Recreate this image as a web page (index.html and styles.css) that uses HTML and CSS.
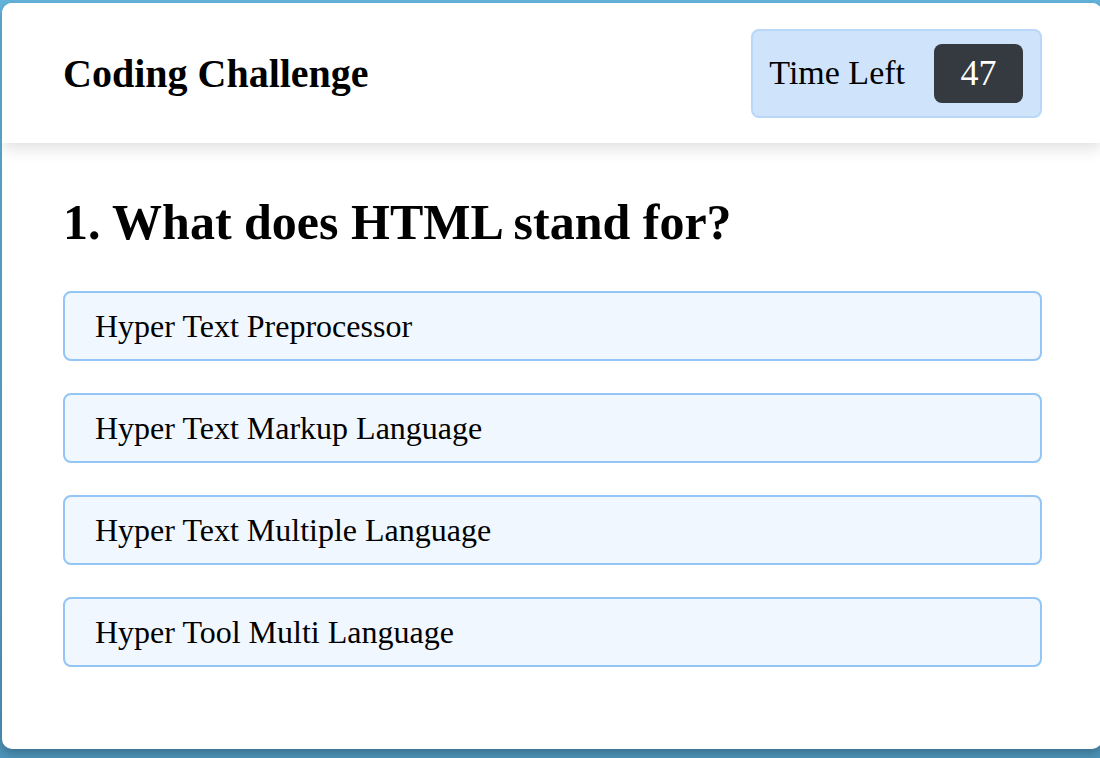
FILE: index.html
```html
<!DOCTYPE html>
<html>
<head>
<meta charset="utf-8">
<link rel="stylesheet" href="styles.css">
</head>
<body>
<div class="card">
  <header class="header">
    <h1 class="title">Coding Challenge</h1>
    <div class="timer">
      <span class="timer-label">Time Left</span>
      <span class="timer-value">47</span>
    </div>
  </header>
  <main class="quiz">
    <h2 class="question">1. What does HTML stand for?</h2>
    <ul class="options">
      <li class="option">Hyper Text Preprocessor</li>
      <li class="option">Hyper Text Markup Language</li>
      <li class="option">Hyper Text Multiple Language</li>
      <li class="option">Hyper Tool Multi Language</li>
    </ul>
  </main>
</div>
</body>
</html>
```

FILE: styles.css
```css
html, body {
  margin: 0;
  padding: 0;
  height: 100%;
  overflow: hidden;
}
body {
  background: linear-gradient(180deg, #64b4dc 0%, #5aa7cf 70%, #4d93b9 100%);
  font-family: "Liberation Serif", "Times New Roman", serif;
  color: #000;
  padding: 3px 0 0 2px;
  box-sizing: border-box;
}
.card {
  width: 1100px;
  height: 746px;
  background: #fff;
  border-radius: 10px;
  overflow: hidden;
  box-shadow: 0 4px 10px rgba(0, 0, 0, 0.25);
}
.header {
  height: 140px;
  padding: 0 60px 0 61px;
  display: flex;
  align-items: center;
  justify-content: space-between;
  background: #fff;
  box-shadow: 0 4px 16px rgba(0, 0, 0, 0.14);
  position: relative;
}
.title {
  margin: 0;
  font-size: 40px;
  font-weight: bold;
}
.timer {
  display: flex;
  align-items: center;
  gap: 29px;
  background: #cfe3fb;
  border: 2px solid #b9d7f9;
  border-radius: 8px;
  padding: 13px 17px 13px 16px;
}
.timer-label {
  font-size: 34px;
}
.timer-value {
  display: flex;
  align-items: center;
  justify-content: center;
  width: 89px;
  height: 59px;
  background: #343a40;
  color: #fff;
  border-radius: 8px;
  font-size: 36px;
}
.quiz {
  padding: 49px 60px 0 61px;
}
.question {
  margin: 0 0 39px;
  font-size: 50px;
  font-weight: bold;
  line-height: 60px;
}
.options {
  list-style: none;
  margin: 0;
  padding: 0;
  display: flex;
  flex-direction: column;
  gap: 32px;
}
.option {
  height: 66px;
  box-sizing: content-box;
  display: flex;
  align-items: center;
  padding: 0 30px;
  background: #f0f7fe;
  border: 2px solid #93c5f5;
  border-radius: 8px;
  font-size: 32px;
}
```
